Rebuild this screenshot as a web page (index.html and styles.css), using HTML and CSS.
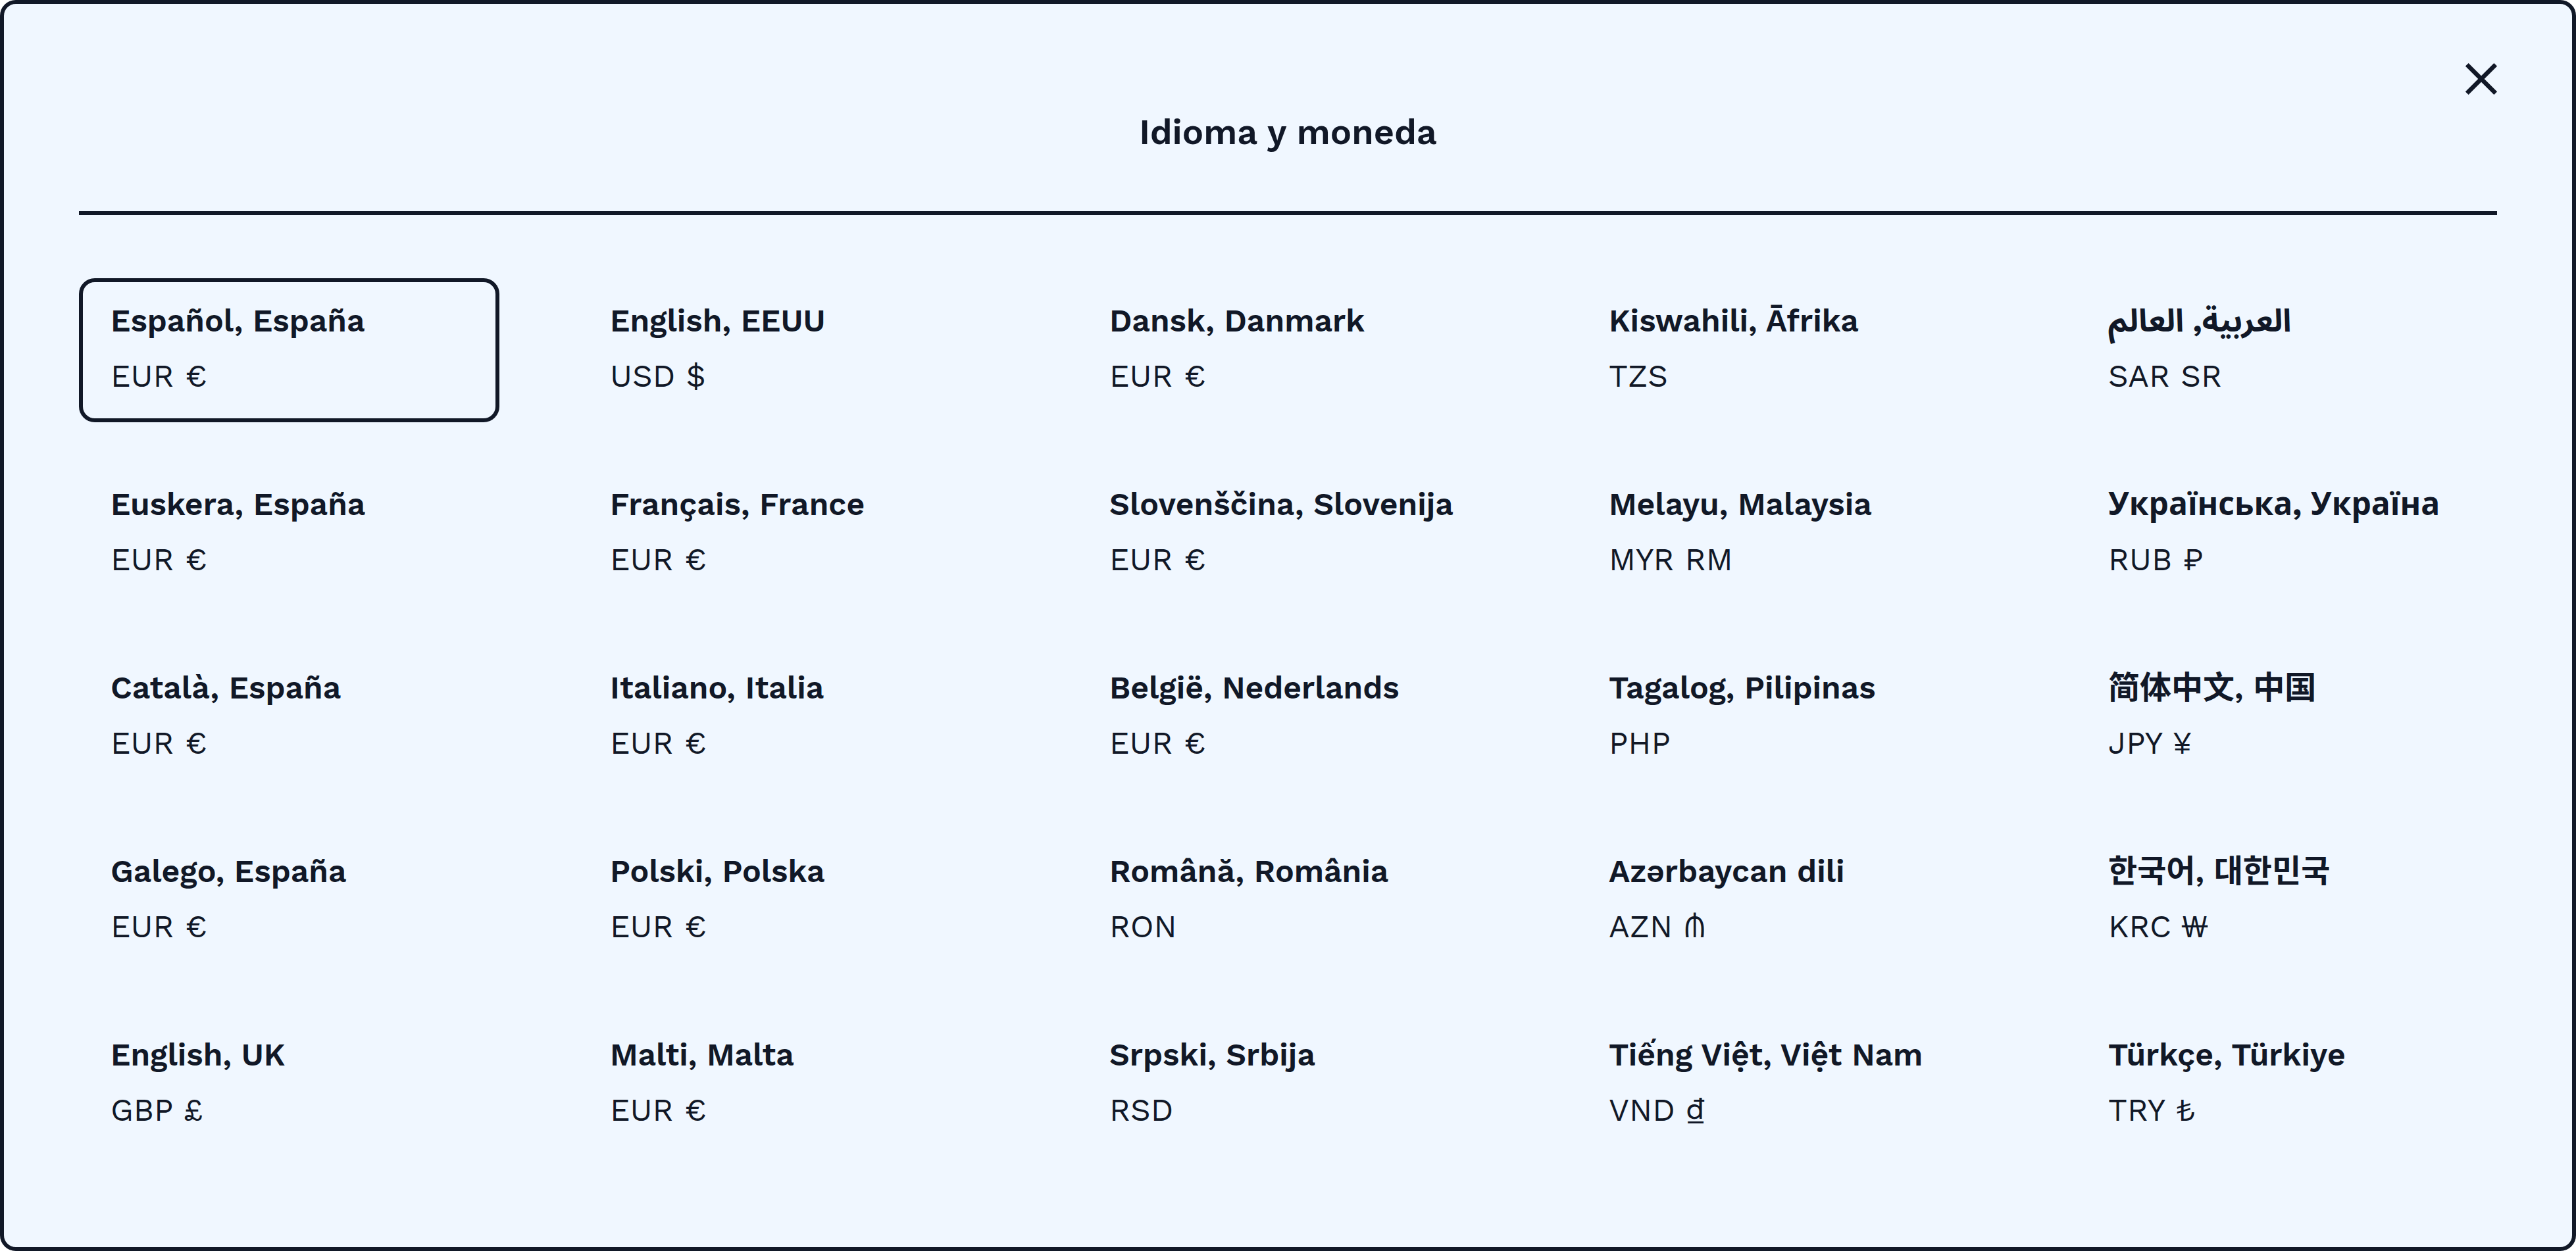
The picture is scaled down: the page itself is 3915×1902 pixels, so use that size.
FILE: index.html
```html
<!DOCTYPE html>
<html lang="es">
<head>
<meta charset="utf-8">
<meta name="viewport" content="width=device-width, initial-scale=1">
<title>Idioma y moneda</title>
<link rel="stylesheet" href="styles.css">
</head>
<body>
<main class="dialog" role="dialog" aria-labelledby="dialog-title">
  <header class="dialog-header">
    <button class="close" type="button" aria-label="Cerrar">
      <svg class="close-icon" viewBox="0 0 48 48" aria-hidden="true"><path d="M2.3 2.3 45.7 45.7M45.7 2.3 2.3 45.7"/></svg>
    </button>
    <h1 class="title" id="dialog-title">Idioma y moneda</h1>
  </header>
  <div class="locales">
    <button class="locale selected" type="button" aria-pressed="true"><span class="name">Español, España</span><span class="currency">EUR €</span></button>
    <button class="locale" type="button"><span class="name" lang="en">English, EEUU</span><span class="currency">USD $</span></button>
    <button class="locale" type="button"><span class="name" lang="da">Dansk, Danmark</span><span class="currency">EUR €</span></button>
    <button class="locale" type="button"><span class="name" lang="sw">Kiswahili, Āfrika</span><span class="currency">TZS</span></button>
    <button class="locale" type="button"><span class="name" lang="ar">العربية, العالم</span><span class="currency">SAR SR</span></button>

    <button class="locale" type="button"><span class="name" lang="eu">Euskera, España</span><span class="currency">EUR €</span></button>
    <button class="locale" type="button"><span class="name" lang="fr">Français, France</span><span class="currency">EUR €</span></button>
    <button class="locale" type="button"><span class="name" lang="sl">Slovenščina, Slovenija</span><span class="currency">EUR €</span></button>
    <button class="locale" type="button"><span class="name" lang="ms">Melayu, Malaysia</span><span class="currency">MYR RM</span></button>
    <button class="locale" type="button"><span class="name" lang="uk">Українська, Україна</span><span class="currency">RUB ₽</span></button>

    <button class="locale" type="button"><span class="name" lang="ca">Català, España</span><span class="currency">EUR €</span></button>
    <button class="locale" type="button"><span class="name" lang="it">Italiano, Italia</span><span class="currency">EUR €</span></button>
    <button class="locale" type="button"><span class="name" lang="nl">België, Nederlands</span><span class="currency">EUR €</span></button>
    <button class="locale" type="button"><span class="name" lang="tl">Tagalog, Pilipinas</span><span class="currency">PHP</span></button>
    <button class="locale" type="button"><span class="name" lang="zh-Hans">简体中文, 中国</span><span class="currency">JPY ¥</span></button>

    <button class="locale" type="button"><span class="name" lang="gl">Galego, España</span><span class="currency">EUR €</span></button>
    <button class="locale" type="button"><span class="name" lang="pl">Polski, Polska</span><span class="currency">EUR €</span></button>
    <button class="locale" type="button"><span class="name" lang="ro">Română, România</span><span class="currency">RON</span></button>
    <button class="locale" type="button"><span class="name" lang="az">Azərbaycan dili</span><span class="currency">AZN ₼</span></button>
    <button class="locale" type="button"><span class="name" lang="ko">한국어, 대한민국</span><span class="currency">KRC ₩</span></button>

    <button class="locale" type="button"><span class="name" lang="en">English, UK</span><span class="currency">GBP £</span></button>
    <button class="locale" type="button"><span class="name" lang="mt">Malti, Malta</span><span class="currency">EUR €</span></button>
    <button class="locale" type="button"><span class="name" lang="sr-Latn">Srpski, Srbija</span><span class="currency">RSD</span></button>
    <button class="locale" type="button"><span class="name" lang="vi">Tiếng Việt, Việt Nam</span><span class="currency">VND ₫</span></button>
    <button class="locale" type="button"><span class="name" lang="tr">Türkçe, Türkiye</span><span class="currency">TRY ₺</span></button>
  </div>
</main>
</body>
</html>
```
FILE: styles.css
```css
*, *::before, *::after {
  box-sizing: border-box;
}

body {
  margin: 0;
  background: #fff;
  color: #111827;
  font-family: "Work Sans", "Open Sans", "Noto Sans CJK SC", sans-serif;
}

.dialog {
  min-height: 100vh;
  padding: 90px 114px 138px;
  border: 6px solid #111827;
  border-radius: 24px;
  background: #f0f7ff;
}

.dialog-header {
  display: flex;
  flex-direction: column;
  gap: 16px;
  padding-bottom: 80px;
  border-bottom: 6px solid #111827;
}

.close {
  align-self: flex-end;
  width: 48px;
  height: 48px;
  padding: 0;
  border: 0;
  background: none;
  color: inherit;
  cursor: pointer;
}

.close-icon {
  display: block;
  width: 100%;
  height: 100%;
  fill: none;
  stroke: currentColor;
  stroke-width: 6.6;
}

.title {
  margin: 0;
  font-size: 54px;
  font-weight: 600;
  line-height: 81px;
  text-align: center;
}

.locales {
  display: grid;
  grid-template-columns: repeat(5, 1fr);
  gap: 60px 120px;
  margin-top: 96px;
}

.locale {
  display: flex;
  flex-direction: column;
  align-items: flex-start;
  min-width: 0;
  padding: 17px 42px 22px;
  border: 6px solid transparent;
  border-radius: 24px;
  background: none;
  color: inherit;
  font-family: inherit;
  font-size: 48px;
  line-height: 84px;
  text-align: left;
  white-space: nowrap;
  cursor: pointer;
}

.locale.selected {
  border-color: #111827;
}

.name {
  height: 84px;
  font-weight: 600;
}

.name:lang(ar) {
  font-family: "Work Sans", "Noto Sans Arabic", sans-serif;
  font-weight: 700;
}

.name:lang(uk) {
  font-weight: 700;
}

.name:lang(ko) {
  font-family: "Work Sans", "Noto Sans CJK KR", sans-serif;
}

.currency {
  height: 84px;
  font-weight: 400;
}
```
